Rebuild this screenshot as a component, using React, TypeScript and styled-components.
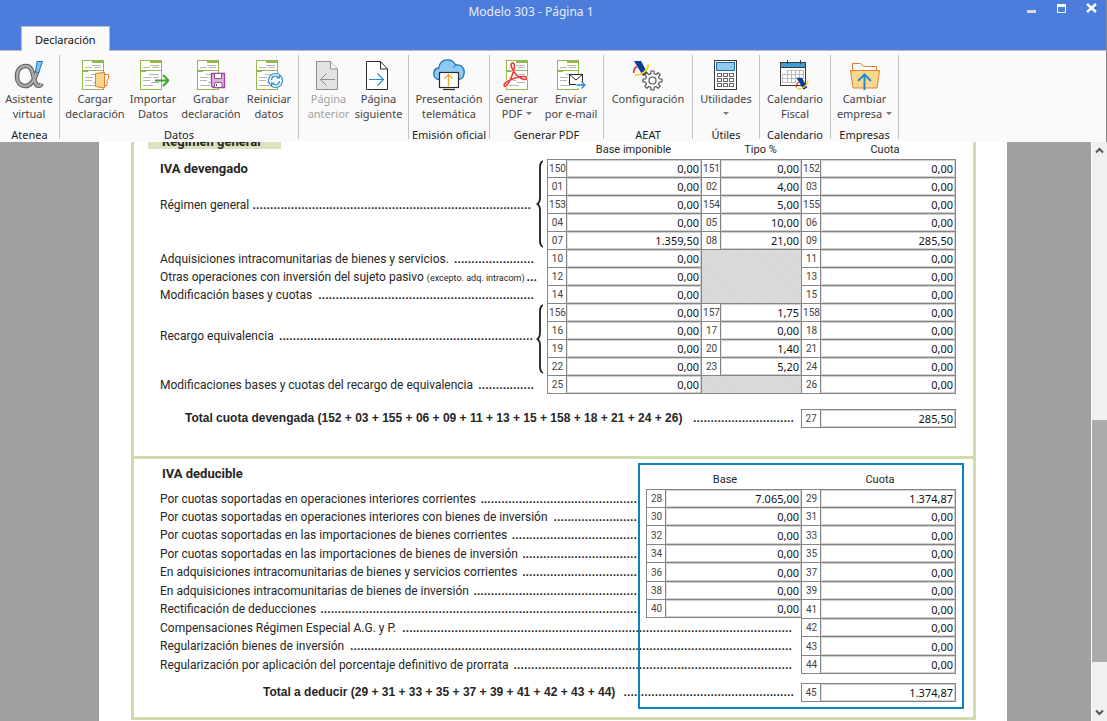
import React, { useId } from 'react';
import styled, { createGlobalStyle, css } from 'styled-components';

const GlobalStyle = createGlobalStyle`
  *, *::before, *::after { box-sizing: border-box; }
  body { margin: 0; background: #a0a0a0; }
  button, input { font: inherit; color: inherit; }
`;

const uiFont = "'Noto Sans', 'Open Sans', sans-serif";
const formFont = "Roboto, 'Liberation Sans', sans-serif";
const green = '#d2dbab';
const line = '#858585';

const Window = styled.div`
  display: flex;
  flex-direction: column;
  height: 100vh;
  overflow: hidden;
  font-family: ${uiFont};
  font-size: 11px;
  line-height: 15px;
  color: #444;
`;

/* Title bar */

const Header = styled.header`
  background: #4c7cdc;
  border-right: 1px solid #858585;
`;

const TitleBar = styled.div`
  display: flex;
  height: 26px;
  padding-left: 44px;
`;

const Title = styled.h1`
  flex: 1;
  margin: 0;
  font-size: 12px;
  line-height: 24px;
  font-weight: 400;
  text-align: center;
  color: #e6edfb;
`;

const WindowControls = styled.div`
  display: flex;
  width: 88px;
  padding: 2px 7px 0 0;
  justify-content: flex-end;
  gap: 16px;
`;

const ControlButton = styled.button`
  width: 14px;
  height: 14px;
  padding: 0;
  border: 0;
  background: none;
  svg { display: block; }
`;

const TabStrip = styled.nav`
  display: flex;
  padding-left: 21px;
  height: 24px;
`;

const Tab = styled.button`
  height: 25px;
  padding: 0 13px;
  border: 1px solid #bcbcbc;
  border-bottom: 0;
  background: #fafafa;
  color: #111;
  position: relative;
`;

/* Ribbon */

const Ribbon = styled.div`
  display: flex;
  height: 92px;
  flex: none;
  border-top: 1px solid #bcbcbc;
  border-right: 1px solid #858585;
  background: #fafafa;
  padding-top: 4px;
`;

const Group = styled.section<{ $width: number }>`
  display: flex;
  flex-direction: column;
  justify-content: space-between;
  flex: 0 0 ${p => p.$width}px;
  height: 84px;
  border-right: 1px solid #c3c3c3;
`;

const GroupButtons = styled.div<{ $align?: string }>`
  display: flex;
  justify-content: ${p => p.$align ?? 'center'};
`;

const GroupName = styled.h2`
  margin: 0;
  font-size: 11px;
  line-height: 8px;
  font-weight: 400;
  text-align: center;
  white-space: nowrap;
  color: #222;
`;

const ToolButton = styled.button<{ $width: number }>`
  display: flex;
  flex-direction: column;
  align-items: center;
  flex: none;
  width: ${p => p.$width}px;
  padding: 4px 0 0;
  border: 0;
  background: none;
  white-space: nowrap;
  color: #444;
  &:disabled { color: #a3a3a3; }
  svg { display: block; flex: none; }
`;

const ToolLabel = styled.span`
  display: flex;
  align-items: center;
  justify-content: center;
  gap: 4px;
  height: 15px;
`;

const Caret = styled.span`
  border: 3px solid transparent;
  border-top-color: #777;
  border-bottom: 0;
`;

/* Document area */

const Workspace = styled.main`
  display: flex;
  flex: 1;
  min-height: 0;
`;

const Canvas = styled.div`
  flex: 1;
  min-width: 0;
  overflow: hidden;
  padding-left: 15px;
  background: #a0a0a0;
`;

const Paper = styled.form`
  max-width: 908px;
  min-height: 100%;
  margin: 0 auto;
  padding: 0 31px 0 32px;
  background: #fff;
  font-family: ${formFont};
  font-size: 12px;
  line-height: 16px;
  color: #262626;
`;

const Frame = styled.div`
  border: solid ${green};
  border-width: 0 3px;
`;

const FormSection = styled.section<{ $bottom: number }>`
  position: relative;
  padding: 0 17px ${p => p.$bottom}px 14px;
  border-bottom: 3px solid ${green};
`;

const Grid = styled.table`
  width: 100%;
  table-layout: fixed;
  border-collapse: separate;
  border-spacing: 0;
  th, td { padding: 0; font-weight: 400; text-align: left; }
  tbody tr { height: 18px; }
  tbody tr:last-child { height: 19px; }
  tbody tr:last-child td { border-bottom: 1px solid ${line}; }
`;

const DeductibleGrid = styled(Grid)`
  tbody tr:nth-child(2n + 3) { height: 19px; }
  tbody tr:nth-child(2n + 3) input { height: 18px; }
  tbody tr:nth-child(7) td:nth-child(-n + 3) { border-bottom: 1px solid ${line}; }
  tbody tr:nth-child(7) td:nth-child(-n + 3) input { height: 17px; }
`;

const HeadRow = styled.tr<{ $height: number }>`
  height: ${p => p.$height}px;
  th { vertical-align: bottom; }
`;

const ColumnName = styled.th<{ $right?: number }>`
  && {
    padding: 0 ${p => p.$right ?? 0}px 1px 0;
    text-align: center;
    font-size: 11px;
    line-height: 16px;
  }
`;

const Tag = styled.div`
  display: flex;
  align-items: flex-end;
  width: 133px;
  height: 7px;
  margin-bottom: 10px;
  padding-left: 14px;
  overflow: hidden;
  background: #dbe2bd;
  font-size: 13px;
  font-weight: 700;
  line-height: 14px;
`;

const SectionTitle = styled.h3`
  margin: 0;
  font-size: 13px;
  line-height: 18px;
  font-weight: 700;
`;

const SubHeading = styled.th`
  padding-left: 14px !important;
  vertical-align: middle !important;
`;

const LabelCell = styled.th<{ $end?: number; $up?: number }>`
  && { padding: 1px ${p => p.$end ?? 9}px ${p => p.$up ?? 0}px 12px; }
`;

const Stack = styled.div`
  display: grid;
  grid-template-rows: 18px 1fr 18px;
  align-items: center;
  height: 89px;
`;

const LabelLine = styled.div`
  display: flex;
  align-items: baseline;
  justify-content: space-between;
  height: 16px;
  gap: 2px;
  white-space: nowrap;
  small { font-size: 9px; }
`;

const Dots = styled.span`
  display: flex;
  flex: 1;
  min-width: 0;
  justify-content: flex-end;
  overflow: hidden;
  font-family: ${formFont};
  font-weight: 700;
`;

const BraceCell = styled.td`
  && { border: 0; }
  svg { display: block; }
`;

const boxed = css`
  border: solid ${line};
  border-width: 1px 0 0 1px;
`;

const Code = styled.td`
  ${boxed}
  && { text-align: center; font-size: 10px; line-height: 16px; color: #444; }
  label { display: block; padding: 1px 0 0 1px; }
`;

const Value = styled.td<{ $last?: boolean }>`
  ${boxed}
  ${p => p.$last && css`border-right-width: 1px;`}
`;

const Shaded = styled.td`
  ${boxed}
  background: repeating-linear-gradient(45deg, #d6d6d6 0 1px, #dcdcdc 1px 2px);
`;

const AmountInput = styled.input`
  display: block;
  width: 100%;
  height: 17px;
  padding: 0 1px;
  border: 1px solid #cfcfcf;
  border-left-color: #e4e4e4;
  border-radius: 0;
  background: #fff;
  font-family: ${uiFont};
  font-size: 11px;
  line-height: 15px;
  text-align: right;
  color: #111;
  outline: 0;
`;

const TotalRow = styled.div<{ $top: number; $indent: number }>`
  display: grid;
  grid-template-columns: minmax(0, 1fr) 19px 136px;
  margin-top: ${p => p.$top}px;
  padding-left: ${p => p.$indent}px;
`;

const TotalLabel = styled.label`
  display: flex;
  align-items: baseline;
  gap: 4px;
  padding: 1px 7px 0 0;
  white-space: nowrap;
  font-family: 'Liberation Sans', Arial, sans-serif;
  font-weight: 700;
`;

const TotalCode = styled.span`
  border: 1px solid ${line};
  border-right: 0;
  font-size: 10px;
  line-height: 17px;
  text-align: center;
  color: #444;
`;

const TotalValue = styled.span`
  border: 1px solid ${line};
`;

const Highlight = styled.div`
  position: absolute;
  top: 4px;
  right: 9px;
  bottom: 8px;
  width: 326px;
  border: 2px solid #0a82c4;
  pointer-events: none;
`;

/* Scroll bar */

const ScrollBar = styled.div`
  display: flex;
  flex-direction: column;
  width: 16px;
  flex: none;
  border-left: 1px solid #fff;
  background: #f0f0f0;
`;

const ScrollButton = styled.button`
  height: 17px;
  padding: 0;
  border: 0;
  background: none;
  svg { display: block; margin: 0 auto; }
`;

const ScrollPart = styled.div<{ $grow: number; $thumb?: boolean }>`
  flex: ${p => p.$grow} 1 0;
  background: ${p => (p.$thumb ? '#ababab' : 'transparent')};
`;

/* Icons */

const Icon = ({ children }: { children: React.ReactNode }) => (
  <svg width="32" height="32" viewBox="0 0 32 32" fill="none" aria-hidden="true">{children}</svg>
);

const Sheet = ({ x = 0 }: { x?: number }) => (
  <g transform={`translate(${x} 0)`}>
    <rect x="3.5" y="1.5" width="21" height="29" fill="#fff" stroke="#93b94c" />
    <path d="M13 1h12v3H13z" fill="#93b94c" />
    <path d="M3 11.5h22M3 12.5h6" stroke="#93b94c" />
    <path d="M13 6.5h9M6 8.5h7M15 8.5h7M12 15.5h10M6 18.5h8M16 18.5h6M6 21.5h7M14 23.5h8M6 26.5h10" stroke="#b5b5b5" />
  </g>
);

const AlphaIcon = () => {
  const stem = 'M24.500 11.500C22 20 18.500 27 12.500 27';
  const bowl = 'M12.500 27C7 27 4 23 4 17.500 4 11 7.500 7 13 7 20.500 7 19.500 18 22.500 24 24 27.500 27.500 27.500 28.500 24.500';
  return (
    <Icon>
      <path d={bowl + stem} stroke="#5c5c5c" strokeWidth="4.600" />
      <path d={bowl + stem} stroke="#a9a9a9" strokeWidth="2.600" />
      <path d="M24 2.500h5.500L25.500 14l-3-1.500z" fill="#7fc0ee" stroke="#1f78bd" />
    </Icon>
  );
};

const LoadIcon = () => (
  <Icon>
    <Sheet />
    <path d="M25.500 15.500h4v4l-1.500 2v5h-2.500" fill="#fff" stroke="#e87b2c" />
    <path d="M16.500 14.500 25.500 13.500V29l-9-1.500z" fill="#f7d68d" stroke="#e87b2c" />
  </Icon>
);

const ImportIcon = () => (
  <Icon>
    <Sheet />
    <path d="M18 21.500h13M26 16l5.500 5.500L26 27" stroke="#3fa62b" strokeWidth="2" />
  </Icon>
);

const SaveIcon = () => (
  <Icon>
    <Sheet x={-1} />
    <path d="M16.500 14.500h13v14H18l-1.500-1.500z" fill="#dcb5dd" stroke="#9a4a9c" strokeWidth="1.300" />
    <path d="M19.500 14.500h7v5h-7z" fill="#fff" stroke="#9a4a9c" />
    <path d="M19.500 23.500h7.500v5h-7.500z" fill="#fff" stroke="#9a4a9c" />
    <path d="M21.500 25v2" stroke="#444" />
  </Icon>
);

const RestartIcon = () => (
  <Icon>
    <Sheet />
    <circle cx="22.500" cy="21.500" r="7" fill="#fff" stroke="#2b8fd0" strokeWidth="1.200" />
    <path d="M18.500 21c0-4 5.500-5.500 7.500-2M26.500 16v3h-3M26.500 22c0 4-5.500 5.500-7.500 2M18.500 27v-3h3" stroke="#2b8fd0" strokeWidth="1.200" />
  </Icon>
);

const PrevIcon = () => (
  <Icon>
    <path d="M3.500 2.500h14l7 7.500v20.500h-21z" fill="#e2e2e2" stroke="#8e8e8e" />
    <path d="M17.500 2.500v7.500h7" fill="#f6f6f6" stroke="#8e8e8e" />
    <path d="M22 20.500H8M13.500 14.500l-6 6 6 6" stroke="#8e8e8e" />
  </Icon>
);

const NextIcon = () => (
  <Icon>
    <path d="M3.500 2.500h14l7 7.500v20.500h-21z" fill="#fff" stroke="#2b2b2b" />
    <path d="M17.500 2.500v7.500h7" stroke="#2b2b2b" />
    <path d="M6 20.500h14M14.500 14.500l6 6-6 6" stroke="#2789cf" strokeWidth="1.200" />
  </Icon>
);

const CloudIcon = () => (
  <Icon>
    <path d="M6 20.500C2 20.500 .8 17 .8 14.500c0-3 2-5.200 5-5.500C6 4 10 .8 14.500.8c4 0 6.800 2.200 8 5.200C28 5 31.200 8.500 31.200 13c0 4-2 7-5.500 7.500z" fill="#8fc8f0" stroke="#1b74bb" strokeWidth="1.300" />
    <path d="M20.500 9c.5-1.500 1.500-2.500 3-3" stroke="#1b74bb" />
    <rect x="6.500" y="13.500" width="19" height="15" fill="#fff" stroke="#2b2b2b" strokeWidth="1.200" />
    <path d="M10 30.500h12" stroke="#2b2b2b" strokeWidth="1.200" />
    <path d="M15.500 27V15.500M11.500 19.500l4-4 4 4" stroke="#f0a92e" strokeWidth="1.400" />
  </Icon>
);

const PdfIcon = () => (
  <Icon>
    <Sheet x={2} />
    <path d="M10.500 4.500C13 2.500 14 6 13 10 12 15 8.500 24 5 27 2.500 28.500 2 25 5.500 23c5-3 12-5.500 17-5.500 4 0 4 3.500.5 3C17 19.500 11.500 12 10.300 7.500c-.3-1.500-.5-2.300.2-3z" stroke="#fff" strokeWidth="3" />
    <path d="M10.500 4.500C13 2.500 14 6 13 10 12 15 8.500 24 5 27 2.500 28.500 2 25 5.500 23c5-3 12-5.500 17-5.500 4 0 4 3.500.5 3C17 19.500 11.500 12 10.300 7.500c-.3-1.500-.5-2.300.2-3z" stroke="#ee3a3c" strokeWidth="1.600" />
  </Icon>
);

const MailIcon = () => (
  <Icon>
    <Sheet x={-1} />
    <rect x="14.500" y="15.500" width="13" height="10" fill="#fff" stroke="#2b2b2b" />
    <path d="M14.500 15.500l6.500 5.500 6.500-5.500" stroke="#2b2b2b" />
    <path d="M21 23h9v6h-9z" fill="#fafafa" />
    <path d="M21.500 26h8M26.500 22.500 30 26l-3.500 3.500" stroke="#2789cf" strokeWidth="1.300" />
  </Icon>
);

const AgencyMark = () => (
  <g>
    <path d="M3 1h7l6.500 12-4.500 3z" fill="#0b3c9e" />
    <path d="M6 6.500C4 7.500 2.500 9.500 2.800 13" stroke="#e22b2b" strokeWidth="1.600" />
    <path d="M17.500 4.500C16.500 10.500 11 15.500 4 15" stroke="#f9d21b" strokeWidth="1.800" />
  </g>
);

const gearPath = (cx: number, cy: number, teeth: number, outer: number, inner: number) => {
  const step = (Math.PI * 2) / teeth;
  const points: string[] = [];
  for (let i = 0; i < teeth; i++) {
    [[-0.3, inner], [-0.2, outer], [0.2, outer], [0.3, inner]].forEach(([offset, radius]) => {
      const angle = (i + offset) * step;
      points.push(`${(cx + Math.cos(angle) * radius).toFixed(2)} ${(cy + Math.sin(angle) * radius).toFixed(2)}`);
    });
  }
  return `M${points.join('L')}z`;
};

const SettingsIcon = () => (
  <Icon>
    <g transform="translate(-1 1)"><AgencyMark /></g>
    <path d={gearPath(20.5, 21.5, 8, 9.6, 7)} fill="#fafafa" stroke="#555" strokeWidth="1.200" strokeLinejoin="round" />
    <circle cx="20.500" cy="21.500" r="3.500" fill="#fafafa" stroke="#555" strokeWidth="1.200" />
  </Icon>
);

const CalculatorIcon = () => (
  <Icon>
    <rect x="4.500" y="1.500" width="22" height="29" fill="#fff" stroke="#3a3a3a" />
    <rect x="6.500" y="3.500" width="18" height="8" fill="#92c9ee" stroke="#1b6db3" />
    {[14.5, 19.5, 24.5].map(y =>
      [7.5, 13.5, 19.5].map(x => <rect key={`${x}-${y}`} x={x} y={y} width="4" height="3" stroke="#666" />),
    )}
  </Icon>
);

const CalendarIcon = () => (
  <Icon>
    <rect x="1.500" y="3.500" width="25" height="23" fill="#fff" stroke="#3a3a3a" />
    <path d="M2 4h24v4H2z" fill="#3f9fd3" />
    <path d="M2 8.500h24M8.500 1v4M21.500 1v4" stroke="#3a3a3a" />
    <path d="M8 11.500h17M3.500 15.500H25M3.500 19.500H25M3.500 23.500H16M3.500 15v9M8.500 11v13M12.500 11v13M16.500 11v13M20.500 11v9M24.500 11v9" stroke="#b9b9b9" />
    <g transform="translate(15 18) scale(.800)"><AgencyMark /></g>
  </Icon>
);

const CompanyIcon = () => (
  <Icon>
    <path d="M3.500 12V4.500h8l3.500 3h12.500V12" fill="#fff" stroke="#e87b2c" />
    <path d="M1.500 11.500h29l-2.500 17.500H4z" fill="#f7d88f" stroke="#e87b2c" />
    <path d="M15.500 31V15.500M9 22l6.500-6.500L22 22" stroke="#2789cf" strokeWidth="2" />
  </Icon>
);

/* Ribbon content */

type Tool = { lines: string[]; icon: () => React.JSX.Element; caret?: boolean; disabled?: boolean };
type ToolGroup = { name: string; width: number; button: number; align?: string; tools: Tool[] };

const groups: ToolGroup[] = [
  { name: 'Atenea', width: 60, button: 58, align: 'flex-start', tools: [{ lines: ['Asistente', 'virtual'], icon: AlphaIcon }] },
  {
    name: 'Datos', width: 239, button: 58, align: 'flex-end', tools: [
      { lines: ['Cargar', 'declaración'], icon: LoadIcon },
      { lines: ['Importar', 'Datos'], icon: ImportIcon },
      { lines: ['Grabar', 'declaración'], icon: SaveIcon },
      { lines: ['Reiniciar', 'datos'], icon: RestartIcon },
    ],
  },
  {
    name: '', width: 110, button: 50, tools: [
      { lines: ['Página', 'anterior'], icon: PrevIcon, disabled: true },
      { lines: ['Página', 'siguiente'], icon: NextIcon },
    ],
  },
  { name: 'Emisión oficial', width: 81, button: 78, tools: [{ lines: ['Presentación', 'telemática'], icon: CloudIcon }] },
  {
    name: 'Generar PDF', width: 114, button: 54, align: 'flex-start', tools: [
      { lines: ['Generar', 'PDF'], icon: PdfIcon, caret: true },
      { lines: ['Enviar', 'por e-mail'], icon: MailIcon },
    ],
  },
  { name: 'AEAT', width: 89, button: 78, tools: [{ lines: ['Configuración'], icon: SettingsIcon }] },
  { name: 'Útiles', width: 67, button: 58, tools: [{ lines: ['Utilidades', ''], icon: CalculatorIcon, caret: true }] },
  { name: 'Calendario', width: 71, button: 58, tools: [{ lines: ['Calendario', 'Fiscal'], icon: CalendarIcon }] },
  { name: 'Empresas', width: 68, button: 58, tools: [{ lines: ['Cambiar', 'empresa'], icon: CompanyIcon, caret: true }] },
];

/* Form content */

const Leader = ({ children, dots }: { children: React.ReactNode; dots: number }) => (
  <LabelLine>
    <span>{children}</span>
    <Dots aria-hidden="true">{'.'.repeat(dots)}</Dots>
  </LabelLine>
);

const Box = ({ code, value, last }: { code: string; value: string; last?: boolean }) => {
  const id = useId();
  return (
    <>
      <Code><label htmlFor={id}>{code}</label></Code>
      <Value $last={last}><AmountInput id={id} defaultValue={value} /></Value>
    </>
  );
};

const Brace = ({ height }: { height: number }) => {
  const mid = height / 2;
  return (
    <svg width="10" height={height} viewBox={`0 0 10 ${height}`} fill="none" aria-hidden="true">
      <path
        d={`M8 2C5 3 5 6 5 10V${mid - 7}C5 ${mid - 3} 4 ${mid - 1} 2.500 ${mid} 4 ${mid + 1} 5 ${mid + 3} 5 ${mid + 7}V${height - 10}C5 ${height - 6} 5 ${height - 3} 8 ${height - 2}`}
        stroke="#222"
        strokeWidth="1.800"
      />
    </svg>
  );
};

const Total = ({ text, dots, code, value, top, indent }: {
  text: string; dots: number; code: string; value: string; top: number; indent: number;
}) => {
  const id = useId();
  return (
    <TotalRow $top={top} $indent={indent}>
      <TotalLabel htmlFor={id}>
        <span>{text}</span>
        <Dots aria-hidden="true">{'.'.repeat(dots)}</Dots>
      </TotalLabel>
      <TotalCode>{code}</TotalCode>
      <TotalValue><AmountInput id={id} defaultValue={value} /></TotalValue>
    </TotalRow>
  );
};

type Cell = [code: string, value: string];
type AccruedRow = { base: Cell; rate?: Cell; quota: Cell };

const accrued: AccruedRow[] = [
  { base: ['150', '0,00'], rate: ['151', '0,00'], quota: ['152', '0,00'] },
  { base: ['01', '0,00'], rate: ['02', '4,00'], quota: ['03', '0,00'] },
  { base: ['153', '0,00'], rate: ['154', '5,00'], quota: ['155', '0,00'] },
  { base: ['04', '0,00'], rate: ['05', '10,00'], quota: ['06', '0,00'] },
  { base: ['07', '1.359,50'], rate: ['08', '21,00'], quota: ['09', '285,50'] },
  { base: ['10', '0,00'], quota: ['11', '0,00'] },
  { base: ['12', '0,00'], quota: ['13', '0,00'] },
  { base: ['14', '0,00'], quota: ['15', '0,00'] },
  { base: ['156', '0,00'], rate: ['157', '1,75'], quota: ['158', '0,00'] },
  { base: ['16', '0,00'], rate: ['17', '0,00'], quota: ['18', '0,00'] },
  { base: ['19', '0,00'], rate: ['20', '1,40'], quota: ['21', '0,00'] },
  { base: ['22', '0,00'], rate: ['23', '5,20'], quota: ['24', '0,00'] },
  { base: ['25', '0,00'], quota: ['26', '0,00'] },
];

const accruedLabels: Record<number, React.ReactNode> = {
  0: (
    <>
      <LabelCell scope="rowgroup" rowSpan={5} $end={4}>
        <Stack>
          <SectionTitle>IVA devengado</SectionTitle>
          <Leader dots={80}>Régimen general</Leader>
        </Stack>
      </LabelCell>
      <BraceCell rowSpan={5}><Brace height={90} /></BraceCell>
    </>
  ),
  5: <LabelCell scope="row" colSpan={2} $end={13}><Leader dots={23}>Adquisiciones intracomunitarias de bienes y servicios.</Leader></LabelCell>,
  6: (
    <LabelCell scope="row" colSpan={2} $end={10}>
      <Leader dots={3}>Otras operaciones con inversión del sujeto pasivo <small>(excepto. adq. intracom)</small></Leader>
    </LabelCell>
  ),
  7: <LabelCell scope="row" colSpan={2} $end={13}><Leader dots={62}>Modificación bases y cuotas</Leader></LabelCell>,
  8: (
    <>
      <LabelCell scope="rowgroup" rowSpan={4} $end={2} $up={8}><Leader dots={73}>Recargo equivalencia</Leader></LabelCell>
      <BraceCell rowSpan={4}><Brace height={72} /></BraceCell>
    </>
  ),
  12: <LabelCell scope="row" colSpan={2} $end={13}><Leader dots={16}>Modificaciones bases y cuotas del recargo de equivalencia</Leader></LabelCell>,
};

type DeductibleRow = { label: string; dots: number; base?: Cell; quota: Cell };

const deductible: DeductibleRow[] = [
  { label: 'Por cuotas soportadas en operaciones interiores corrientes', dots: 45, base: ['28', '7.065,00'], quota: ['29', '1.374,87'] },
  { label: 'Por cuotas soportadas en operaciones interiores con bienes de inversión', dots: 24, base: ['30', '0,00'], quota: ['31', '0,00'] },
  { label: 'Por cuotas soportadas en las importaciones de bienes corrientes', dots: 36, base: ['32', '0,00'], quota: ['33', '0,00'] },
  { label: 'Por cuotas soportadas en las importaciones de bienes de inversión', dots: 33, base: ['34', '0,00'], quota: ['35', '0,00'] },
  { label: 'En adquisiciones intracomunitarias de bienes y servicios corrientes', dots: 33, base: ['36', '0,00'], quota: ['37', '0,00'] },
  { label: 'En adquisiciones intracomunitarias de bienes de inversión', dots: 47, base: ['38', '0,00'], quota: ['39', '0,00'] },
  { label: 'Rectificación de deducciones', dots: 91, base: ['40', '0,00'], quota: ['41', '0,00'] },
  { label: 'Compensaciones Régimen Especial A.G. y P.', dots: 112, quota: ['42', '0,00'] },
  { label: 'Regularización bienes de inversión', dots: 127, quota: ['43', '0,00'] },
  { label: 'Regularización por aplicación del porcentaje definitivo de prorrata', dots: 80, quota: ['44', '0,00'] },
];

const shadedFrom: Record<number, number> = { 5: 3, 12: 1 };

export default function App() {
  return (
    <Window>
      <GlobalStyle />
      <Header>
        <TitleBar>
          <Title>Modelo 303 - Página 1</Title>
          <WindowControls>
            <ControlButton type="button" aria-label="Minimizar">
              <svg width="14" height="14"><path d="M2 8h9v3H2z" fill="#dcdcdc" /></svg>
            </ControlButton>
            <ControlButton type="button" aria-label="Maximizar">
              <svg width="14" height="14"><path d="M2.500 3.500h8v7h-8z" fill="none" stroke="#fff" /><path d="M2 2h9v3H2z" fill="#fff" /></svg>
            </ControlButton>
            <ControlButton type="button" aria-label="Cerrar">
              <svg width="14" height="14"><path d="M2 2l9 8M11 2l-9 8" stroke="#fff" strokeWidth="2.400" /></svg>
            </ControlButton>
          </WindowControls>
        </TitleBar>
        <TabStrip>
          <Tab type="button">Declaración</Tab>
        </TabStrip>
      </Header>

      <Ribbon>
        {groups.map(group => (
          <Group key={group.width + group.name} $width={group.width}>
            <GroupButtons $align={group.align}>
              {group.tools.map(tool => (
                <ToolButton key={tool.lines.join(' ')} type="button" $width={group.button} disabled={tool.disabled}>
                  <tool.icon />
                  {tool.lines.map((text, i) => (
                    <ToolLabel key={i}>
                      {text}
                      {tool.caret && i === tool.lines.length - 1 && <Caret />}
                    </ToolLabel>
                  ))}
                </ToolButton>
              ))}
            </GroupButtons>
            {group.name && <GroupName>{group.name}</GroupName>}
          </Group>
        ))}
      </Ribbon>

      <Workspace>
        <Canvas>
          <Paper>
            <Frame>
              <FormSection $bottom={28}>
                <Grid>
                  <colgroup>
                    <col />
                    <col style={{ width: 12 }} />
                    <col style={{ width: 19 }} />
                    <col style={{ width: 135 }} />
                    <col style={{ width: 19 }} />
                    <col style={{ width: 81 }} />
                    <col style={{ width: 19 }} />
                    <col style={{ width: 136 }} />
                  </colgroup>
                  <thead>
                    <HeadRow $height={17}>
                      <th colSpan={3}><Tag>Régimen general</Tag></th>
                      <ColumnName scope="col">Base imponible</ColumnName>
                      <th />
                      <ColumnName scope="col">Tipo %</ColumnName>
                      <th />
                      <ColumnName scope="col" $right={6}>Cuota</ColumnName>
                    </HeadRow>
                  </thead>
                  <tbody>
                    {accrued.map((row, i) => (
                      <tr key={row.base[0]}>
                        {accruedLabels[i]}
                        <Box code={row.base[0]} value={row.base[1]} />
                        {row.rate && <Box code={row.rate[0]} value={row.rate[1]} />}
                        {shadedFrom[i] && <Shaded colSpan={2} rowSpan={shadedFrom[i]} />}
                        <Box code={row.quota[0]} value={row.quota[1]} last />
                      </tr>
                    ))}
                  </tbody>
                </Grid>
                <Total
                  text="Total cuota devengada (152 + 03 + 155 + 06 + 09 + 11 + 13 + 15 + 158 + 18 + 21 + 24 + 26)"
                  dots={29}
                  code="27"
                  value="285,50"
                  top={15}
                  indent={37}
                />
              </FormSection>

              <FormSection $bottom={15}>
                <DeductibleGrid>
                  <colgroup>
                    <col />
                    <col style={{ width: 19 }} />
                    <col style={{ width: 136 }} />
                    <col style={{ width: 19 }} />
                    <col style={{ width: 136 }} />
                  </colgroup>
                  <thead>
                    <HeadRow $height={30}>
                      <SubHeading><SectionTitle>IVA deducible</SectionTitle></SubHeading>
                      <th />
                      <ColumnName scope="col" $right={16}>Base</ColumnName>
                      <th />
                      <ColumnName scope="col" $right={16}>Cuota</ColumnName>
                    </HeadRow>
                  </thead>
                  <tbody>
                    {deductible.map(row => (
                      <tr key={row.label}>
                        <LabelCell scope="row" colSpan={row.base ? 1 : 3}>
                          <Leader dots={row.dots}>{row.label}</Leader>
                        </LabelCell>
                        {row.base && <Box code={row.base[0]} value={row.base[1]} />}
                        <Box code={row.quota[0]} value={row.quota[1]} last />
                      </tr>
                    ))}
                  </tbody>
                </DeductibleGrid>
                <Total
                  text="Total a deducir (29 + 31 + 33 + 35 + 37 + 39 + 41 + 42 + 43 + 44)"
                  dots={49}
                  code="45"
                  value="1.374,87"
                  top={9}
                  indent={115}
                />
                <Highlight />
              </FormSection>
            </Frame>
          </Paper>
        </Canvas>
        <ScrollBar>
          <ScrollButton type="button" aria-label="Subir">
            <svg width="9" height="7" viewBox="0 0 9 7"><path d="M1 5.500 4.500 2 8 5.500" fill="none" stroke="#555" strokeWidth="2" /></svg>
          </ScrollButton>
          <ScrollPart $grow={261} />
          <ScrollPart $grow={242} $thumb />
          <ScrollPart $grow={42} />
          <ScrollButton type="button" aria-label="Bajar">
            <svg width="9" height="7" viewBox="0 0 9 7"><path d="M1 1.500 4.500 5 8 1.500" fill="none" stroke="#555" strokeWidth="2" /></svg>
          </ScrollButton>
        </ScrollBar>
      </Workspace>
    </Window>
  );
}
